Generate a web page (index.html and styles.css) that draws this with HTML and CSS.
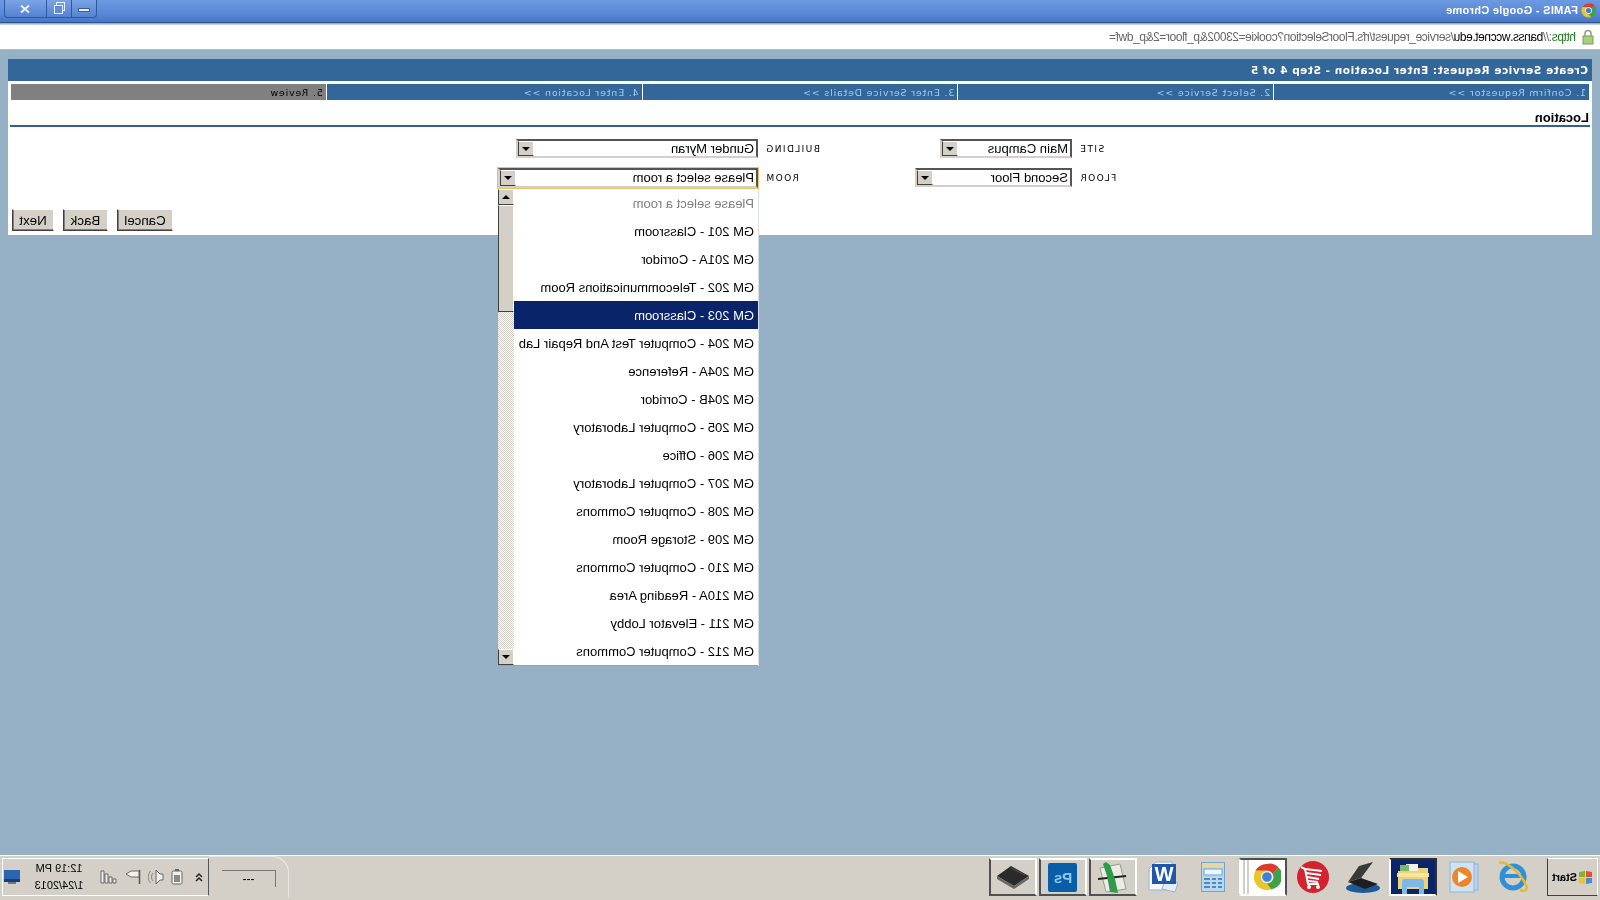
FILE: index.html
```html
<!DOCTYPE html>
<html lang="en">
<head>
    <meta charset="UTF-8">
    <title>FAMIS - Google Chrome</title>
    <link rel="stylesheet" href="styles.css">
</head>
<body>
    <svg class="defs" width="0" height="0">
        <symbol id="chrome" viewBox="0 0 32 32">
            <circle cx="16" cy="16" r="15" fill="#e8c62c"/>
            <path d="M16 1a15 15 0 0 1 13 7.500H16a7.500 7.500 0 0 0-6.500 3.750L3 4.800A15 15 0 0 1 16 1z" fill="#dc3a2e"/>
            <path d="M3 4.800l6.500 7.450A7.500 7.500 0 0 0 16 23.500L11 30.100A15 15 0 0 1 3 4.800z" fill="#3ea24a"/>
            <circle cx="16" cy="16" r="7" fill="#f4f6fa"/>
            <circle cx="16" cy="16" r="5.500" fill="#3f7fd8"/>
        </symbol>
    </svg>

    <div class="mirror">
        <div class="titlebar">
            <svg class="title-icon"><use href="#chrome"/></svg>
            <span class="title-text">FAMIS - Google Chrome</span>
            <div class="win-controls">
                <div class="win-btn win-min"><span class="min-bar"></span></div>
                <div class="win-btn win-restore"><span class="restore-back"></span><span class="restore-front"></span></div>
                <div class="win-btn win-close">
                    <svg width="12" height="10" viewBox="0 0 12 10"><path d="M2 1.500l8 7M10 1.500l-8 7" stroke="#e8f0fa" stroke-width="2"/></svg>
                </div>
            </div>
        </div>

        <div class="addressbar">
            <svg class="lock" width="12" height="16" viewBox="0 0 12 16">
                <path d="M3 7V4.500a3 3 0 0 1 6 0V7" fill="none" stroke="#8f9a86" stroke-width="1.500"/>
                <rect x="1" y="7" width="10" height="8" fill="#a8cf7c" stroke="#7e9a60"/>
            </svg>
            <span class="url"><span class="url-scheme">https</span><span class="url-rest">://</span><span class="url-host">banss.wccnet.edu</span><span class="url-rest">/service_request/rfs.FloorSelection?cookie=23002&amp;p_floor=2&amp;p_dwf=</span></span>
        </div>

        <div class="page">
            <div class="panel">
                <div class="panel-title">Create Service Request: Enter Location - Step 4 of 5</div>
                <div class="steps">
                    <div class="step">1. Confirm Requestor &gt;&gt;</div>
                    <div class="step">2. Select Service &gt;&gt;</div>
                    <div class="step">3. Enter Service Details &gt;&gt;</div>
                    <div class="step">4. Enter Location &gt;&gt;</div>
                    <div class="step step-current">5. Review</div>
                </div>
                <div class="section-title">Location</div>

                <div class="form-grid">
                    <label class="field-label">SITE</label>
                    <div class="select select-site"><span class="select-value">Main Campus</span><span class="select-arrow"><i class="tri-down"></i></span></div>
                    <label class="field-label">BUILDING</label>
                    <div class="select select-building"><span class="select-value">Gunder Myran</span><span class="select-arrow"><i class="tri-down"></i></span></div>

                    <label class="field-label">FLOOR</label>
                    <div class="select select-floor"><span class="select-value">Second Floor</span><span class="select-arrow"><i class="tri-down"></i></span></div>
                    <label class="field-label">ROOM</label>
                    <div class="select select-room">
                        <span class="select-value">Please select a room</span><span class="select-arrow"><i class="tri-down"></i></span>
                        <div class="dropdown">
                            <ul class="options">
                                <li class="option option-muted">Please select a room</li>
                                <li class="option">GM 201 - Classroom</li>
                                <li class="option">GM 201A - Corridor</li>
                                <li class="option">GM 202 - Telecommunications Room</li>
                                <li class="option option-active">GM 203 - Classroom</li>
                                <li class="option">GM 204 - Computer Test And Repair Lab</li>
                                <li class="option">GM 204A - Reference</li>
                                <li class="option">GM 204B - Corridor</li>
                                <li class="option">GM 205 - Computer Laboratory</li>
                                <li class="option">GM 206 - Office</li>
                                <li class="option">GM 207 - Computer Laboratory</li>
                                <li class="option">GM 208 - Computer Commons</li>
                                <li class="option">GM 209 - Storage Room</li>
                                <li class="option">GM 210 - Computer Commons</li>
                                <li class="option">GM 210A - Reading Area</li>
                                <li class="option">GM 211 - Elevator Lobby</li>
                                <li class="option">GM 212 - Computer Commons</li>
                            </ul>
                            <div class="scrollbar">
                                <span class="scroll-btn"><i class="tri-up"></i></span>
                                <span class="scroll-thumb"></span>
                                <span class="scroll-track"></span>
                                <span class="scroll-btn"><i class="tri-down"></i></span>
                            </div>
                        </div>
                    </div>
                </div>

                <div class="actions">
                    <button class="btn btn-cancel">Cancel</button>
                    <button class="btn btn-back">Back</button>
                    <button class="btn btn-next">Next</button>
                </div>
            </div>
        </div>

        <div class="taskbar">
            <div class="start-btn">
                <svg width="15" height="15" viewBox="0 0 15 15">
                    <path d="M1 2l6-1v6H1z" fill="#e2522c"/><path d="M8 1l6 1v5H8z" fill="#7cb53a"/>
                    <path d="M1 8h6v6l-6-1z" fill="#3f8fd8"/><path d="M8 8h6v5l-6 1z" fill="#f0c030"/>
                </svg>
                <span>Start</span>
            </div>

            <div class="launch">
                <div class="slot">
                    <svg width="34" height="34" viewBox="0 0 34 34">
                        <circle cx="17" cy="17" r="11" fill="none" stroke="#2f8fd8" stroke-width="5"/>
                        <path d="M8 16h18" stroke="#2f8fd8" stroke-width="4"/>
                        <path d="M31 3C25 0 10 12 4 25c-2 5 1 7 6 5" fill="none" stroke="#e8b830" stroke-width="2.500"/>
                    </svg>
                </div>
                <div class="slot">
                    <svg width="32" height="34" viewBox="0 0 32 34">
                        <rect x="1" y="4" width="22" height="26" fill="#b8d4ea" stroke="#8fb4d4"/>
                        <rect x="5" y="2" width="24" height="30" fill="#cfe2f2" stroke="#8fb4d4"/>
                        <circle cx="17" cy="17" r="10" fill="#f08428"/>
                        <path d="M21 11v12l-10-6z" fill="#fff"/>
                    </svg>
                </div>
                <div class="slot slot-active-dark">
                    <svg width="38" height="34" viewBox="0 0 38 34">
                        <path d="M4 8h10l2 3h18v18H4z" fill="#ecd278"/>
                        <path d="M14 4h12v7H14z" fill="#f2f2ea"/>
                        <path d="M23 5h9v6h-9z" fill="#7cb86a"/>
                        <path d="M3 13h32v4H3z" fill="#f6e6a0"/>
                        <path d="M8 34V22a3 3 0 0 1 3-3h16a3 3 0 0 1 3 3v12h-5v-7H13v7z" fill="#7cb8ea"/>
                    </svg>
                </div>
                <div class="slot">
                    <svg width="36" height="34" viewBox="0 0 36 34">
                        <ellipse cx="18" cy="28" rx="17" ry="5" fill="#1d5a9a"/>
                        <path d="M3 24l17-6 13 4-17 7z" fill="#1e1e1e"/>
                        <path d="M20 18L8 2l14 4 11 16z" fill="#3a3a3a"/>
                    </svg>
                </div>
                <div class="slot">
                    <svg width="34" height="34" viewBox="0 0 34 34">
                        <circle cx="17" cy="17" r="16" fill="#d2232e"/>
                        <path d="M25 9L8 11M24 13L9 15M23 17L11 19M22 21L12 22" stroke="#fff" stroke-width="2"/>
                        <path d="M29 7l-4 2-3 15H11" fill="none" stroke="#fff" stroke-width="2"/>
                        <circle cx="12" cy="27" r="2" fill="#fff"/><circle cx="21" cy="27" r="2" fill="#fff"/>
                    </svg>
                </div>
                <div class="slot slot-pressed">
                    <svg width="28" height="28"><use href="#chrome"/></svg>
                </div>
                <div class="slot">
                    <svg width="24" height="30" viewBox="0 0 24 30">
                        <rect x=".5" y=".5" width="23" height="29" fill="#b8d8ee" stroke="#6fa4cc"/>
                        <rect x="1" y="1" width="22" height="4" fill="#e8d8a0"/>
                        <rect x="3" y="7" width="18" height="6" fill="#eef6fb" stroke="#6fa4cc"/>
                        <path d="M3 16h4v2H3zM9 16h4v2H9zM15 16h6v2h-6zM3 20h4v2H3zM9 20h4v2H9zM15 20h6v2h-6zM3 24h4v2H3zM9 24h4v2H9zM15 24h6v2h-6z" fill="#4a8cc0"/>
                    </svg>
                </div>
                <div class="slot">
                    <svg width="32" height="32" viewBox="0 0 32 32">
                        <path d="M7 1h16l7 7v21H7z" fill="#f4f8fc" stroke="#9ab4d0"/>
                        <path d="M1 22l13-3 3 9-13 3z" fill="#e4ecf4" stroke="#9ab4d0"/>
                        <path d="M3 3h24v20H3z" fill="#1f58a8"/>
                        <text class="word-w" x="15" y="20" text-anchor="middle">W</text>
                    </svg>
                </div>
                <div class="slot slot-raised">
                    <svg width="34" height="34" viewBox="0 0 34 34">
                        <path d="M10 4l20 4-6 24-20-3z" fill="#ecece4" stroke="#9a9a90"/>
                        <path d="M4 16l28 3" stroke="#222" stroke-width="2"/>
                        <path d="M12 33l3-14 5-14 4-3 3 2-4 12-3 16z" fill="#2e9a4a"/>
                    </svg>
                </div>
                <div class="slot slot-raised">
                    <div class="ps-icon">Ps</div>
                </div>
                <div class="slot slot-raised">
                    <svg width="34" height="26" viewBox="0 0 34 26">
                        <path d="M1 12L19 2l14 10-17 10z" fill="#2a2a2a"/>
                        <path d="M1 12l15 10 17-10v3L16 25 1 15z" fill="#666"/>
                        <path d="M5 11L19 4" stroke="#555"/>
                    </svg>
                </div>
            </div>

            <div class="spacer"></div>

            <div class="tray-tab">
                <div class="tray-tab-box">---</div>
            </div>
            <div class="tray">
                <svg class="tray-chevron" width="8" height="10" viewBox="0 0 8 10"><path d="M1 5l3-3 3 3M1 9l3-3 3 3" fill="none" stroke="#222" stroke-width="1.500"/></svg>
                <svg width="12" height="16" viewBox="0 0 12 16"><rect x="1" y="2" width="10" height="13" rx="1.500" fill="#f2f0ea" stroke="#666"/><rect x="3" y="6" width="6" height="7" fill="#8a8a84"/><rect x="4" y="0" width="4" height="2" fill="#666"/></svg>
                <svg width="16" height="16" viewBox="0 0 16 16"><path d="M1 5h3l4-4v14l-4-4H1z" fill="#f2f0ea" stroke="#666"/><path d="M11 4a6 6 0 0 1 0 8M13.500 2a9 9 0 0 1 0 12" fill="none" stroke="#888"/></svg>
                <svg width="17" height="16" viewBox="0 0 17 16"><path d="M1.500 1v14" stroke="#555" stroke-width="1.500"/><path d="M2 2h8l5 3-5 3H2z" fill="#f2f0ea" stroke="#666"/></svg>
                <svg width="17" height="14" viewBox="0 0 17 14"><path d="M1 9h3v4H1zM5 7h3v6H5zM9 4h3v9H9zM13 1h3v12h-3z" fill="#f2f0ea" stroke="#666"/></svg>
                <div class="clock"><span>12:19 PM</span><span>1/24/2013</span></div>
                <svg class="show-desktop" width="16" height="14" viewBox="0 0 16 14"><rect width="16" height="12" fill="#2a66b0"/><rect y="9" width="16" height="3" fill="#14407a"/><rect x="4" y="12" width="8" height="2" fill="#777"/></svg>
            </div>
        </div>
    </div>
</body>
</html>
```

FILE: styles.css
```css
html, body {
    margin: 0;
    padding: 0;
    width: 1600px;
    height: 900px;
    overflow: hidden;
    background: #96b1c5;
}

.defs {
    position: absolute;
}

/* the whole capture is flipped left to right */
.mirror {
    width: 1600px;
    height: 900px;
    display: flex;
    flex-direction: column;
    transform: scaleX(-1);
    font-family: "Liberation Sans", Arial, sans-serif;
    font-size: 13px;
    color: #000;
}

/* window chrome */
.titlebar {
    height: 22px;
    flex: none;
    display: flex;
    align-items: flex-start;
    padding-left: 4px;
    background: linear-gradient(#6c9ae2, #5a88d6 60%, #4a76c4);
    border-bottom: 1px solid #2c5590;
}

.title-icon {
    width: 15px;
    height: 15px;
    margin: 3px 3px 0 0;
}

.title-text {
    line-height: 20px;
    font-size: 11px;
    font-weight: bold;
    letter-spacing: 0.3px;
    color: #fff;
}

.win-controls {
    margin-left: auto;
    margin-right: 4px;
    display: flex;
    height: 17px;
    border: 1px solid #2c5a9c;
    border-top: 0;
    border-radius: 0 0 4px 4px;
}

.win-btn {
    display: flex;
    align-items: center;
    justify-content: center;
    position: relative;
    background: linear-gradient(#7aa4e6, #5582d2);
    border-left: 1px solid #2c5a9c;
}

.win-min {
    width: 24px;
    border-left: 0;
    border-radius: 0 0 0 4px;
}

.min-bar {
    width: 10px;
    height: 2px;
    margin-top: 3px;
    background: #eaf0fa;
    border: 1px solid #34609f;
}

.win-restore {
    width: 24px;
}

.restore-back, .restore-front {
    position: absolute;
    width: 7px;
    height: 7px;
    border: 1px solid #eaf0fa;
}

.restore-back {
    left: 6px;
    top: 2px;
}

.restore-front {
    left: 8px;
    top: 5px;
    background: #5f8cd8;
}

.win-close {
    width: 41px;
    border-radius: 0 0 4px 0;
}

.addressbar {
    height: 24px;
    flex: none;
    margin-top: 1px;
    display: flex;
    align-items: center;
    padding-left: 6px;
    background: #fff;
    border-top: 1px solid #c4d2de;
    border-bottom: 1px solid #bcbcbc;
}

.lock {
    margin-right: 6px;
}

.url {
    font-size: 12px;
    letter-spacing: -0.42px;
    white-space: nowrap;
}

.url-scheme {
    color: #1f7a1f;
}

.url-rest {
    color: #666;
}

.url-host {
    color: #000;
}

/* page */
.page {
    flex: 1;
    padding: 9px 8px 0;
    background: #96b1c5;
}

.panel {
    height: 176px;
    background: #fff;
}

.panel-title {
    height: 22px;
    line-height: 22px;
    padding-left: 4px;
    background: #336699;
    color: #fff;
    font-family: "DejaVu Sans", sans-serif;
    font-size: 10.5px;
    font-weight: bold;
    letter-spacing: 0.55px;
}

.steps {
    display: flex;
    margin: 3px 3px 0;
    height: 16px;
}

.step {
    flex: 1;
    line-height: 17px;
    padding-left: 3px;
    background: #336699;
    border-right: 1px solid #fff;
    color: #a4ccf2;
    font-family: "DejaVu Sans", sans-serif;
    font-size: 9.5px;
    letter-spacing: 0.8px;
}

.step:last-child {
    border-right: 0;
}

.step-current {
    background: #808080;
    color: #000;
}

.section-title {
    height: 16px;
    margin: 0 2px;
    padding: 9px 0 0 1px;
    line-height: 17px;
    font-weight: bold;
    font-size: 13px;
    border-bottom: 2px solid #34608f;
}

.form-grid {
    display: grid;
    grid-template-columns: 513px 157px 143px 1fr;
    grid-auto-rows: 20px;
    column-gap: 7px;
    row-gap: 9px;
    margin-top: 12px;
}

.field-label {
    text-align: right;
    line-height: 21px;
    font-family: "DejaVu Sans", sans-serif;
    font-size: 9px;
    letter-spacing: 1.4px;
}

.select {
    position: relative;
    display: flex;
    height: 19px;
    box-sizing: border-box;
    background: #fff;
    border: 2px solid;
    border-color: #555 #d4d0c8 #d4d0c8 #555;
}

.select-value {
    flex: 1;
    padding-left: 2px;
    line-height: 16px;
    white-space: nowrap;
    overflow: hidden;
}

.select-arrow {
    width: 16px;
    flex: none;
    display: flex;
    align-items: center;
    justify-content: center;
    box-sizing: border-box;
    background: #d4d0c8;
    border: 1px solid;
    border-color: #fff #404040 #404040 #fff;
}

.tri-down, .tri-up {
    width: 0;
    height: 0;
    border-left: 4px solid transparent;
    border-right: 4px solid transparent;
}

.tri-down {
    border-top: 4px solid #000;
}

.tri-up {
    border-bottom: 4px solid #000;
}

.select-site {
    width: 132px;
}

.select-floor {
    width: 157px;
}

.select-building {
    width: 242px;
}

.select-room {
    width: 260px;
    height: 20px;
    box-shadow: 0 0 0 1px #e8c46a;
}

/* open list of the room select */
.dropdown {
    position: absolute;
    left: -2px;
    top: 19px;
    width: 260px;
    display: flex;
    background: #fff;
    border-bottom: 1px solid #8ea4b6;
    box-shadow: -1px 0 0 #d8e0e6;
    z-index: 2;
}

.options {
    list-style: none;
    margin: 0;
    padding: 0;
    flex: 1;
}

.option {
    height: 28px;
    line-height: 29px;
    padding-left: 4px;
    white-space: nowrap;
}

.option-muted {
    color: #808080;
}

.option-active {
    background: #0a246a;
    color: #fff;
}

.scrollbar {
    width: 16px;
    flex: none;
    display: flex;
    flex-direction: column;
}

.scroll-btn {
    height: 16px;
    flex: none;
    display: flex;
    align-items: center;
    justify-content: center;
    box-sizing: border-box;
    background: #d4d0c8;
    border: 1px solid;
    border-color: #fff #404040 #404040 #fff;
}

.scroll-thumb {
    height: 107px;
    flex: none;
    box-sizing: border-box;
    background: #d4d0c8;
    border: 1px solid;
    border-color: #fff #404040 #404040 #fff;
}

.scroll-track {
    flex: 1;
    background: repeating-conic-gradient(#d4d0c8 0 25%, #fff 0 50%) 0 0 / 2px 2px;
}

.actions {
    display: flex;
    justify-content: flex-end;
    gap: 9px;
    margin: 21px 4px 0 0;
}

.btn {
    height: 22px;
    padding: 0;
    font-family: "Liberation Sans", Arial, sans-serif;
    font-size: 13.33px;
    background: #d4d0c8;
    color: #000;
    border: 1px solid;
    border-color: #fff #404040 #404040 #fff;
    box-shadow: inset -1px -1px 0 #808080;
}

.btn-cancel {
    width: 56px;
}

.btn-back {
    width: 45px;
}

.btn-next {
    width: 42px;
}

/* taskbar */
.taskbar {
    height: 45px;
    flex: none;
    display: flex;
    align-items: flex-start;
    padding-top: 2px;
    box-sizing: border-box;
    background: #d4d0c8;
    border-top: 1px solid #fff;
}

.start-btn {
    width: 51px;
    height: 38px;
    margin-left: 2px;
    flex: none;
    display: flex;
    align-items: center;
    justify-content: center;
    gap: 1px;
    box-sizing: border-box;
    font-size: 11px;
    font-weight: bold;
    border: 1px solid;
    border-color: #fff #404040 #404040 #fff;
}

.launch {
    display: flex;
    gap: 2px;
    margin-left: 10px;
}

.slot {
    width: 48px;
    height: 38px;
    box-sizing: border-box;
    display: flex;
    align-items: center;
    justify-content: center;
    border: 2px solid transparent;
}

.slot-raised {
    border-color: #fff #505050 #505050 #fff;
}

.slot-pressed {
    padding-right: 8px;
    background: linear-gradient(to left, #fff 2px, #d4d0c8 2px 4px, #fff 4px 6px, #d4d0c8 6px 8px, #fff 8px);
    border-color: #505050 transparent #fff #505050;
}

.slot-active-dark {
    background: #0a246a;
    border-color: #303030 #fff #fff #303030;
}

.ps-icon {
    width: 29px;
    height: 29px;
    line-height: 29px;
    text-align: center;
    font-size: 15px;
    font-weight: bold;
    color: #8cc8f0;
    background: #0a5ea8;
    border-radius: 2px;
}

.word-w {
    font-family: "Liberation Sans", Arial, sans-serif;
    font-size: 20px;
    font-weight: bold;
    fill: #fff;
}

.spacer {
    flex: 1;
}

.tray-tab {
    width: 80px;
    height: 42px;
    margin-top: -2px;
    flex: none;
    border-top-left-radius: 16px;
    box-shadow: inset 1px 1px 0 #e8e6e0;
    display: flex;
    justify-content: center;
    align-items: flex-start;
}

.tray-tab-box {
    width: 53px;
    height: 16px;
    margin-top: 14px;
    line-height: 16px;
    text-align: center;
    font-size: 12px;
    border-left: 1px solid #777;
    border-top: 1px solid #777;
}

.tray {
    width: 207px;
    height: 38px;
    margin-right: 2px;
    flex: none;
    box-sizing: border-box;
    display: flex;
    align-items: center;
    gap: 7px;
    padding-left: 5px;
    border: 1px solid;
    border-color: #fff #fff #fff #555;
}

.tray-chevron {
    margin-right: 5px;
}

.clock {
    display: flex;
    flex-direction: column;
    align-items: center;
    width: 50px;
    margin-left: 9px;
    font-size: 11px;
    line-height: 17px;
}

.show-desktop {
    margin-left: 7px;
}
```
